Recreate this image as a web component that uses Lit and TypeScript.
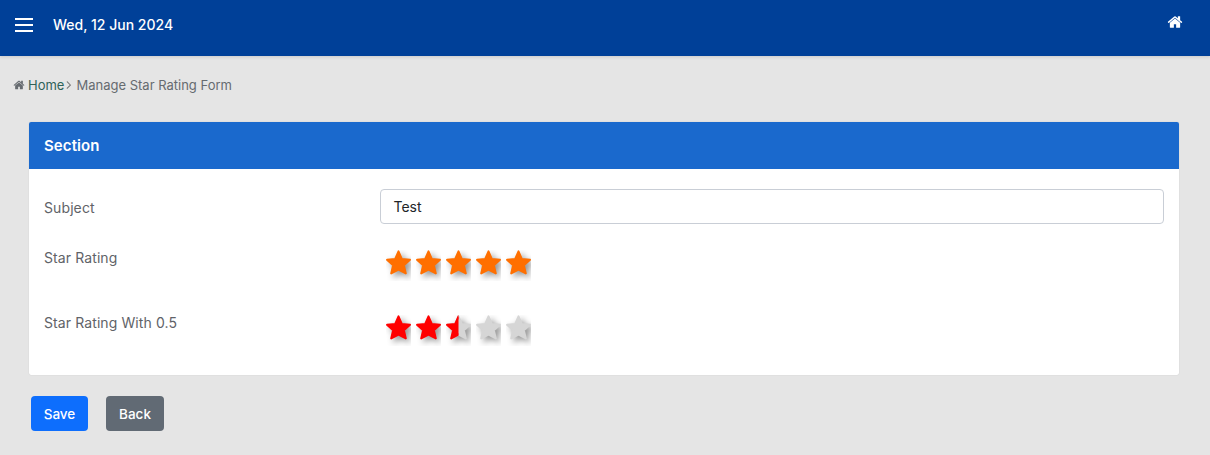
import { LitElement, html, css, svg } from "lit";
import { customElement } from "lit/decorators.js";

const HOME = "M1472 992v480q0 26-19 45t-45 19h-384v-384h-256v384h-384q-26 0-45-19t-19-45v-480q0-1 .5-3t.5-3l575-474 575 474q1 2 1 6zm223-69l-62 74q-8 9-21 11h-3q-13 0-21-7l-692-577-692 577q-12 8-24 7-13-2-21-11l-62-74q-8-10-7-23.500t11-21.500l719-599q32-26 76-26t76 26l244 204v-195q0-14 9-23t23-9h192q14 0 23 9t9 23v408l219 182q10 8 11 21.500t-7 23.500z";
const ANGLE = "M1171 960q0 13-10 23l-466 466q-10 10-23 10t-23-10l-50-50q-10-10-10-23t10-23l393-393-393-393q-10-10-10-23t10-23l50-50q10-10 23-10t23 10l466 466q10 10 10 23z";
const STAR = "M12.5 1.4 L15.9 9.1 L24 9.8 L17.9 15.3 L19.8 23.4 L12.5 19.5 L5.2 23.4 L7.1 15.3 L1 9.8 L9.1 9.1 Z";

@customElement("app-root")
export class AppRoot extends LitElement {
  static styles = css`
    :host { display: block; min-height: 455px; background: #e5e5e5; font-family: Inter, "Liberation Sans", sans-serif; color: #5f6368; overflow: hidden; }
    .top { height: 56px; background: #004098; box-shadow: 0 1px 3px rgba(0,0,0,.12); display: flex; align-items: center; padding: 0 27px 6px 15px; box-sizing: border-box; color: #fff; }
    .burger { width: 18px; display: flex; flex-direction: column; gap: 4px; margin-right: 20px; }
    .burger span { height: 2px; background: #fff; }
    .date { font-size: 14px; font-weight: 500; flex: 1; line-height: 20px; margin-top: -1px; }
    .topHome { width: 16px; height: 16px; fill: #fff; margin-bottom: 6px; }
    .crumb { display: flex; align-items: center; padding: 21px 12px 0 13px; height: 16px; font-size: 13px; line-height: 16px; color: #666b70; }
    .crumb .ic { width: 12px; height: 12px; fill: #666b70; margin-right: 3px; }
    .crumb a { color: #2f6258; }
    .crumb .sep { width: 8px; height: 10px; fill: #777; margin: 0 3px 0 1px; }
    .card { margin: 29px 31px 0 29px; background: #fff; border-radius: 2px; height: 253px; box-shadow: 0 0 1px rgba(0,0,0,.2); }
    .head { height: 47px; background: #1a69cd; border-radius: 2px 2px 0 0; color: #fff; font-size: 15px; font-weight: 600; letter-spacing: .1px; display: flex; align-items: center; padding: 0 15px; }
    .row { display: flex; padding: 0 15px; }
    .label { width: 336px; font-size: 14px; line-height: 20px; color: #5f6368; letter-spacing: .1px; }
    .field { flex: 1; }
    .r1 { padding-top: 20px; height: 35px; align-items: center; }
    .r1 .label { margin-top: 2px; }
    .r2 { padding-top: 24px; height: 41px; }
    .r2 .stars { margin-top: 2px; }
    .r3 { padding-top: 24px; height: 41px; }
    .r3 .stars { margin-top: 2px; }
    .input { height: 35px; box-sizing: border-box; border: 1px solid #c9ced6; border-radius: 4px; padding: 0 12.500px; display: flex; align-items: center; font-size: 14px; color: #212529; }
    .stars { display: flex; gap: 5px; padding: 0 0 0 6px; }
    .cell { width: 25px; height: 31px; overflow: hidden; display: block; }
    .cell svg { width: 25px; height: 25px; display: block; overflow: visible; filter: drop-shadow(3px 3px 3px rgba(0,0,0,.42)); }
    .actions { display: flex; gap: 18px; padding: 21px 2px 0 31px; }
    .btn { height: 35px; border-radius: 4px; color: #fff; font-size: 13.500px; font-weight: 500; display: flex; align-items: center; justify-content: center; }
    .save { width: 57px; background: #0d6efd; }
    .back { width: 58px; background: #616a74; }
  `;

  private star(color: string, half = false) {
    return html`<span class="cell"><svg viewBox="0 0 25 25">
      <path d=${STAR} fill=${half ? "#d6d6d6" : color} stroke=${half ? "#d6d6d6" : color} stroke-width="2" stroke-linejoin="round"></path>
      ${half ? svg`<clipPath id="h"><rect x="0" y="0" width="12.5" height="25"></rect></clipPath><g clip-path="url(#h)"><path d=${STAR} fill=${color} stroke=${color} stroke-width="2" stroke-linejoin="round"></path></g>` : ""}
    </svg></span>`;
  }

  render() {
    return html`
      <div class="top">
        <div class="burger"><span></span><span></span><span></span></div>
        <div class="date">Wed, 12 Jun 2024</div>
        <svg class="topHome" viewBox="0 0 1792 1792"><path d=${HOME}></path></svg>
      </div>
      <div class="crumb">
        <svg class="ic" viewBox="0 0 1792 1792"><path d=${HOME}></path></svg>
        <a>Home</a>
        <svg class="sep" viewBox="500 300 800 1300"><path d=${ANGLE}></path></svg>
        <span>Manage Star Rating Form</span>
      </div>
      <div class="card">
        <div class="head">Section</div>
        <div class="row r1"><div class="label">Subject</div><div class="field"><div class="input">Test</div></div></div>
        <div class="row r2"><div class="label">Star Rating</div><div class="field"><div class="stars">
          ${[0,1,2,3,4].map(() => this.star("#ff6f00"))}
        </div></div></div>
        <div class="row r3"><div class="label">Star Rating With 0.5</div><div class="field"><div class="stars">
          ${this.star("#ff0000")}${this.star("#ff0000")}${this.star("#ff0000", true)}${this.star("#d6d6d6")}${this.star("#d6d6d6")}
        </div></div></div>
      </div>
      <div class="actions">
        <div class="btn save">Save</div>
        <div class="btn back">Back</div>
      </div>
    `;
  }
}
